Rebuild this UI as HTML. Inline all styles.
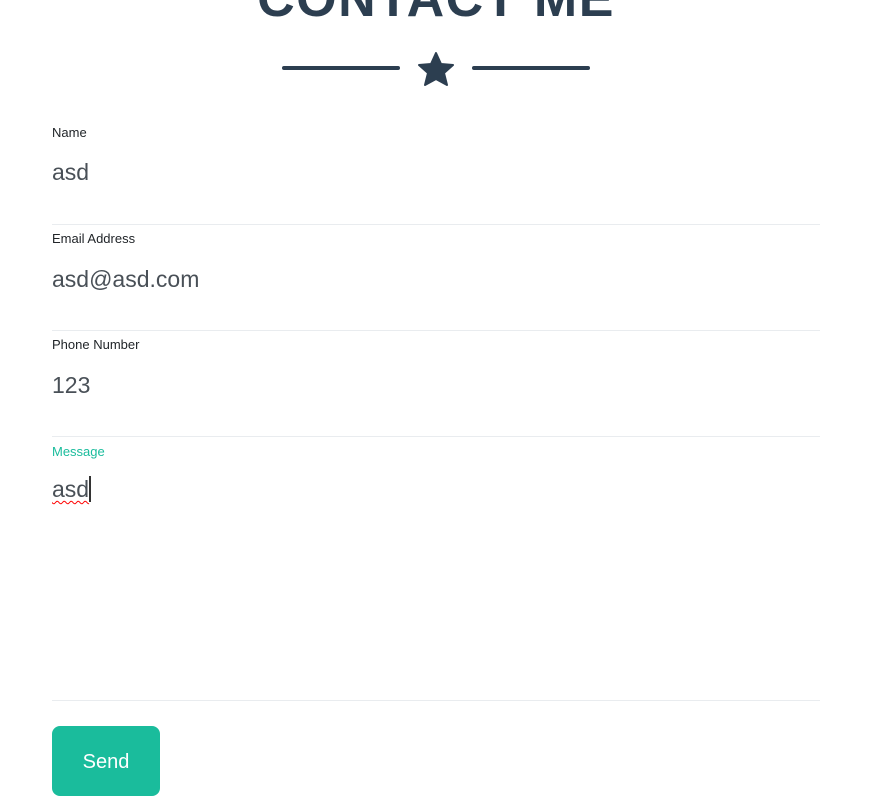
<!DOCTYPE html>
<html><head><style>
body{margin:0;background:#fff;width:888px;height:810px;overflow:hidden;position:relative;font-family:"Liberation Sans",sans-serif;}
.t{position:absolute;left:0;width:872px;text-align:center;top:-27px;font-size:52px;font-weight:bold;color:#2c3e50;letter-spacing:1.5px;line-height:52px}
.ln{position:absolute;top:66px;height:4px;width:118px;background:#2c3e50;border-radius:2px}
.lab{position:absolute;left:52px;font-size:13px;color:#212529}
.val{position:absolute;left:52px;font-size:23px;color:#495057}
.sep{position:absolute;left:52px;width:768px;height:1px;background:#e9ecef}
.btn{position:absolute;left:52px;top:726px;width:108px;height:70px;background:#1abc9c;border-radius:8px;color:#fff;font-size:20px;text-align:center;line-height:72px}
</style></head><body>
<div class="t">CONTACT ME</div>
<div class="ln" style="left:282px"></div>
<div class="ln" style="left:472px"></div>
<svg style="position:absolute;left:417px;top:51px" width="38" height="36" viewBox="0 0 38 36"><path d="M19 2 L24 13 L36 14 L27 22 L30 34 L19 28 L8 34 L11 22 L2 14 L14 13 Z" fill="#2c3e50" stroke="#2c3e50" stroke-width="2" stroke-linejoin="round"/></svg>
<div class="lab" style="top:125px">Name</div>
<div class="val" style="top:159px">asd</div>
<div class="sep" style="top:224px"></div>
<div class="lab" style="top:231px">Email Address</div>
<div class="val" style="top:266px">asd@asd.com</div>
<div class="sep" style="top:330px"></div>
<div class="lab" style="top:337px">Phone Number</div>
<div class="val" style="top:372px">123</div>
<div class="sep" style="top:436px"></div>
<div class="lab" style="top:444px;color:#1abc9c">Message</div>
<div class="val" style="top:476px"><span style="text-decoration:underline wavy red;text-decoration-thickness:1px;text-underline-offset:3px">asd</span><span style="display:inline-block;width:2px;height:26px;background:#333;vertical-align:-5px"></span></div>
<div class="sep" style="top:700px"></div>
<div class="btn">Send</div>
</body></html>
